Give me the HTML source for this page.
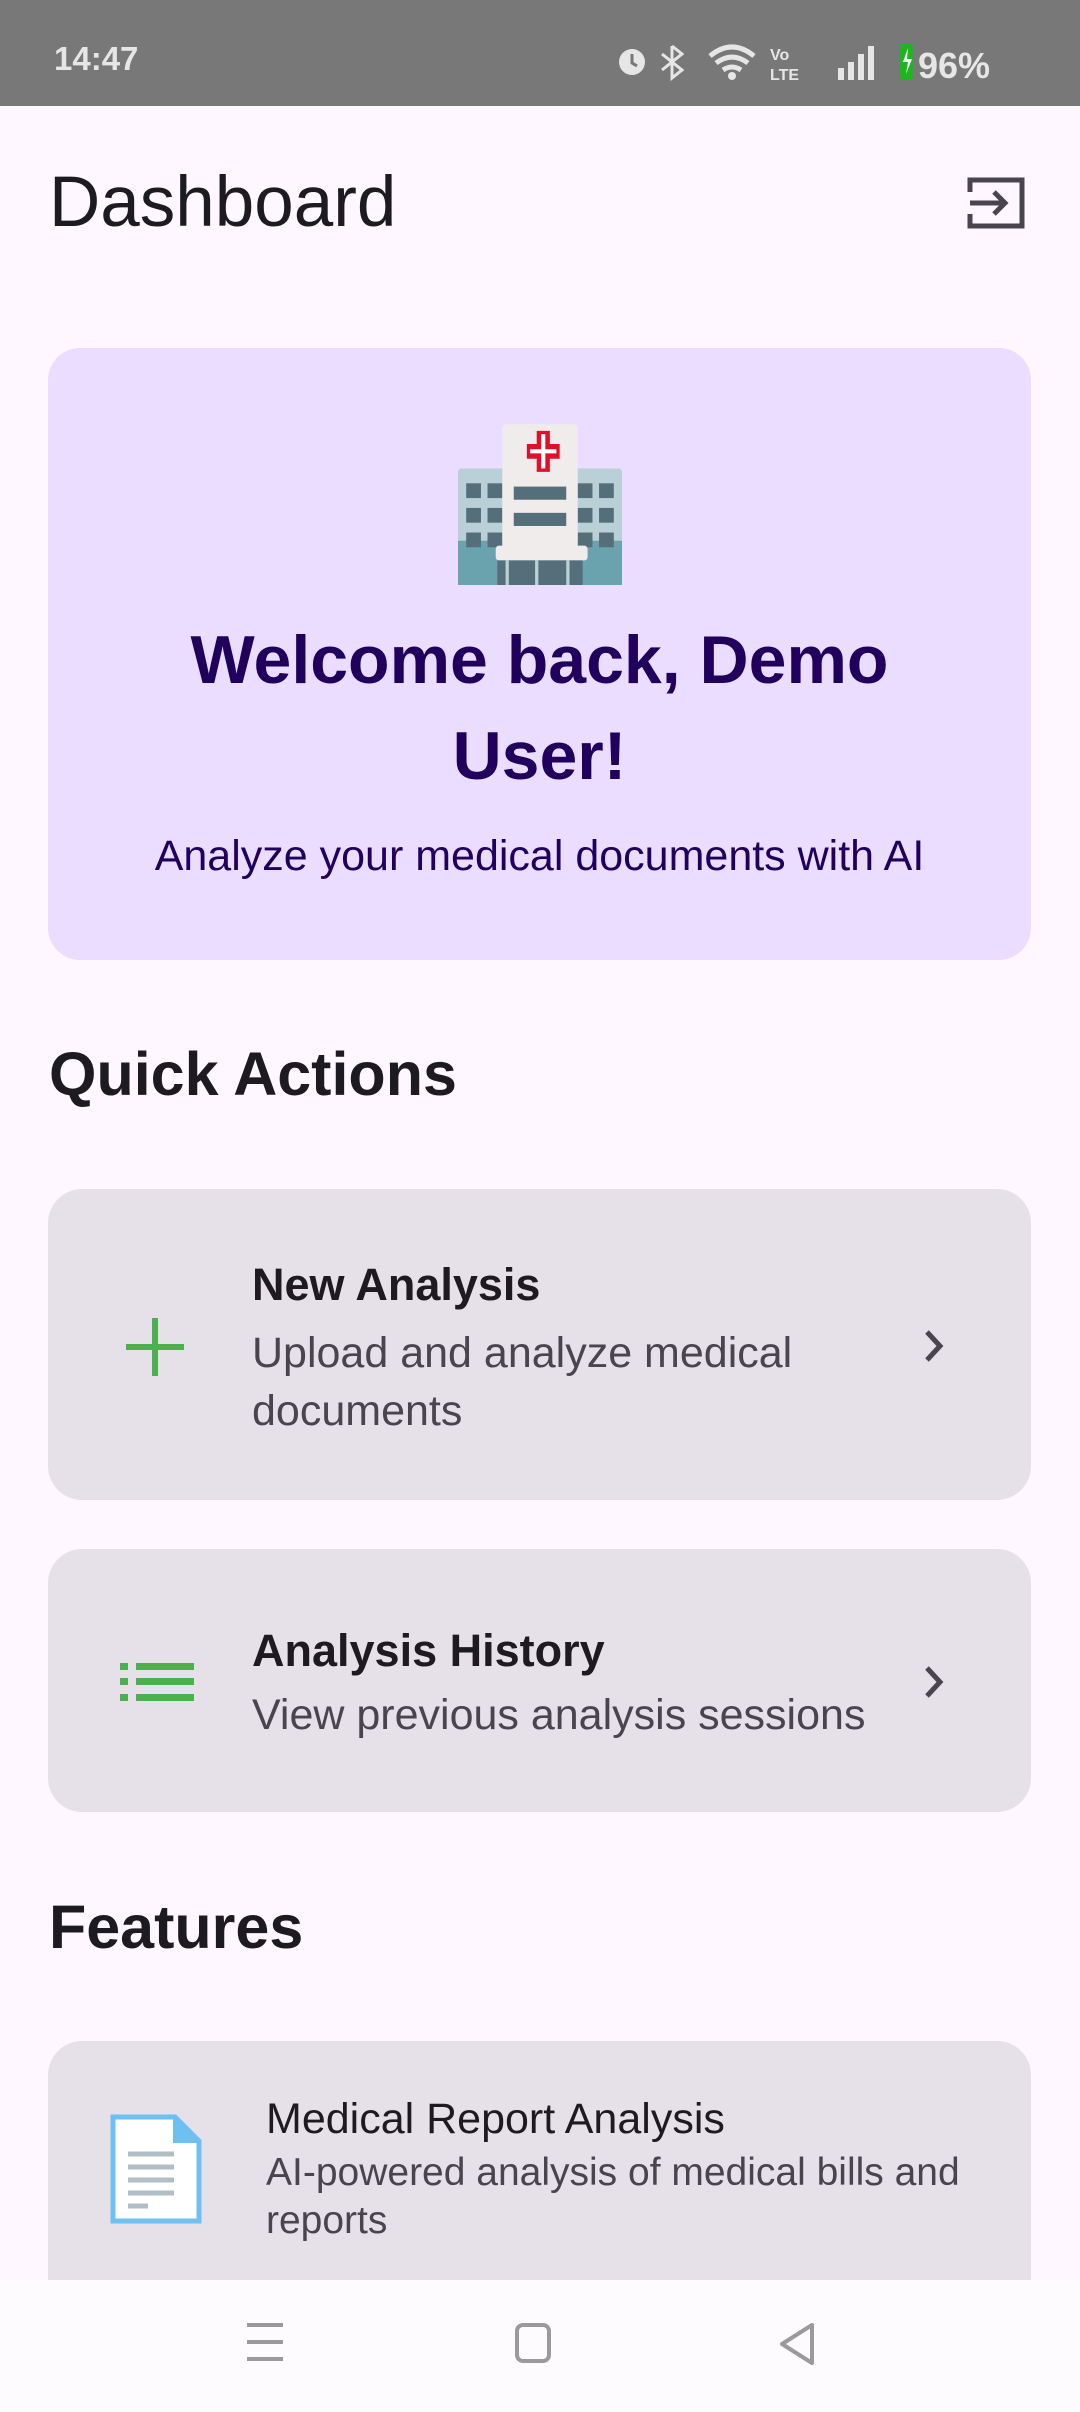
<!DOCTYPE html>
<html><head><meta charset="utf-8"><style>
*{margin:0;padding:0;box-sizing:border-box}
body{width:1080px;height:2412px;background:#FEF7FF;font-family:"Liberation Sans",sans-serif;position:relative;overflow:hidden}
.a{position:absolute;white-space:nowrap}
.card{position:absolute;left:48px;width:983px;background:#E6E0E9;border-radius:34px}
.t{font-size:45px;font-weight:bold;color:#1D1B20}
.s{font-size:43px;color:#49454F}
</style></head><body>
<div class="a" style="left:0;top:0;width:1080px;height:106px;background:#787878"></div>
<div class="a" style="left:54px;top:40px;font-size:33px;font-weight:bold;color:#e6e6e6">14:47</div>
<svg class="a" style="left:610px;top:38px" width="410" height="44" viewBox="0 0 410 44">
<circle cx="22" cy="24" r="13" fill="#e6e6e6"/><path d="M22 16v9l5 3" stroke="#777" stroke-width="3" fill="none"/>
<path d="M62 8l10 8-10 8 10 8-10 8V8M52 16l20 16M52 32l20-16" stroke="#e6e6e6" stroke-width="3" fill="none"/>
<path d="M100 18q22-18 44 0M106 25q16-12 32 0M113 32q9-6 18 0" stroke="#e6e6e6" stroke-width="5" fill="none"/><circle cx="122" cy="38" r="4" fill="#e6e6e6"/>
<text x="160" y="22" font-size="16" font-weight="bold" fill="#e6e6e6" font-family="Liberation Sans">Vo</text><text x="160" y="42" font-size="16" font-weight="bold" fill="#e6e6e6" font-family="Liberation Sans">LTE</text>
<rect x="228" y="30" width="6" height="12" fill="#e6e6e6"/><rect x="238" y="24" width="6" height="18" fill="#e6e6e6"/><rect x="248" y="16" width="6" height="26" fill="#e6e6e6"/><rect x="258" y="8" width="6" height="34" fill="#e6e6e6"/>
<rect x="290" y="6" width="13" height="36" rx="3" fill="#1fb51f"/><path d="M298 10l-5 14h5l-2 12 6-15h-5z" fill="#fff"/>
<text x="308" y="40" font-size="36" font-weight="bold" fill="#e6e6e6" font-family="Liberation Sans">96%</text>
</svg>
<div class="a" style="left:49px;top:162px;font-size:71px;color:#1D1B20">Dashboard</div>
<svg class="a" style="left:966px;top:174px" width="60" height="58" viewBox="0 0 60 58"><path d="M4 18V6h52v46H4V40" stroke="#49454F" stroke-width="5" fill="none"/><path d="M4 29h34M28 18l11 11-11 11" stroke="#49454F" stroke-width="5" fill="none"/></svg>
<div class="a" style="left:48px;top:348px;width:983px;height:612px;background:#EADDFF;border-radius:32px"></div>
<svg class="a" style="left:458px;top:420px" width="164" height="166" viewBox="0 0 100 100">
<rect x="0" y="29" width="100" height="71" rx="2" fill="#B9D0D6"/><rect x="0" y="73" width="100" height="27" fill="#6AA3AD"/>
<g fill="#546E7A"><rect x="5" y="38" width="9" height="9"/><rect x="18" y="38" width="9" height="9"/><rect x="5" y="53" width="9" height="9"/><rect x="18" y="53" width="9" height="9"/><rect x="73" y="38" width="9" height="9"/><rect x="86" y="38" width="9" height="9"/><rect x="73" y="53" width="9" height="9"/><rect x="86" y="53" width="9" height="9"/><rect x="5" y="68" width="9" height="9"/><rect x="18" y="68" width="9" height="9"/><rect x="73" y="68" width="9" height="9"/><rect x="86" y="68" width="9" height="9"/></g>
<rect x="27" y="2" width="46" height="76" rx="2" fill="#F0ECEC"/>
<path d="M42 14h6v-8h8v8h6v9h-6v8h-8v-8h-6z" fill="#E0102A"/><path d="M44 18.5h16M52 8v21" stroke="#fff" stroke-width="2.5"/>
<rect x="34" y="40" width="32" height="8" fill="#546E7A"/><rect x="34" y="56" width="32" height="8" fill="#546E7A"/>
<rect x="23" y="76" width="56" height="9" rx="2" fill="#F0ECEC"/>
<rect x="24" y="85" width="52" height="15" fill="#546E7A"/><rect x="29" y="85" width="2" height="15" fill="#B9D0D6"/><rect x="47" y="85" width="2" height="15" fill="#B9D0D6"/><rect x="66" y="85" width="2" height="15" fill="#B9D0D6"/>
</svg>
<div class="a" style="left:48px;width:983px;top:612px;text-align:center;font-size:68px;font-weight:bold;color:#21005D;line-height:96px;white-space:normal">Welcome back, Demo<br>User!</div>
<div class="a" style="left:48px;width:983px;top:832px;text-align:center;font-size:43px;color:#21005D">Analyze your medical documents with AI</div>
<div class="a" style="left:49px;top:1039px;font-size:61px;font-weight:bold;color:#1D1B20">Quick Actions</div>
<div class="card" style="top:1189px;height:311px"></div>
<svg class="a" style="left:126px;top:1318px" width="58" height="58"><path d="M29 0v58M0 29h58" stroke="#4CAF50" stroke-width="6"/></svg>
<div class="a t" style="left:252px;top:1259px">New Analysis</div>
<div class="a s" style="left:252px;top:1324px;line-height:58px">Upload and analyze medical<br>documents</div>
<svg class="a" style="left:920px;top:1328px" width="30" height="36"><path d="M7 4l13 14-13 14" stroke="#49454F" stroke-width="5" fill="none"/></svg>
<div class="card" style="top:1549px;height:263px"></div>
<svg class="a" style="left:120px;top:1663px" width="74" height="38"><g fill="#4CAF50"><rect x="0" y="0" width="8" height="7"/><rect x="16" y="0" width="58" height="7"/><rect x="0" y="15" width="8" height="7"/><rect x="16" y="15" width="58" height="7"/><rect x="0" y="31" width="8" height="7"/><rect x="16" y="31" width="58" height="7"/></g></svg>
<div class="a t" style="left:252px;top:1625px">Analysis History</div>
<div class="a s" style="left:252px;top:1691px">View previous analysis sessions</div>
<svg class="a" style="left:920px;top:1664px" width="30" height="36"><path d="M7 4l13 14-13 14" stroke="#49454F" stroke-width="5" fill="none"/></svg>
<div class="a" style="left:49px;top:1892px;font-size:61px;font-weight:bold;color:#1D1B20">Features</div>
<div class="card" style="top:2041px;height:300px"></div>
<svg class="a" style="left:110px;top:2114px" width="92" height="110" viewBox="0 0 92 110"><path d="M3 3h62l24 24v80H3z" fill="#fff" stroke="#6EC0F2" stroke-width="5"/><path d="M63 3v26h26z" fill="#6EC0F2"/><g stroke="#B0BEC5" stroke-width="5"><path d="M18 40h46M18 53h46M18 66h46M18 79h46M18 92h20"/></g></svg>
<div class="a" style="left:266px;top:2095px;font-size:43px;color:#1D1B20">Medical Report Analysis</div>
<div class="a" style="left:266px;top:2149px;font-size:39px;color:#49454F;line-height:48px">AI-powered analysis of medical bills and<br>reports</div>
<div class="a" style="left:0;top:2280px;width:1080px;height:132px;background:#FEFBFF"></div>
<svg class="a" style="left:245px;top:2322px" width="40" height="44"><path d="M2 3h36M2 20h36M2 37h36" stroke="#9a9a9a" stroke-width="4"/></svg>
<svg class="a" style="left:514px;top:2322px" width="38" height="44"><rect x="3" y="3" width="32" height="36" rx="6" stroke="#9a9a9a" stroke-width="4" fill="none"/></svg>
<svg class="a" style="left:778px;top:2322px" width="40" height="44"><path d="M34 3L4 22l30 19z" stroke="#9a9a9a" stroke-width="4" fill="none" stroke-linejoin="round"/></svg>
</body></html>
